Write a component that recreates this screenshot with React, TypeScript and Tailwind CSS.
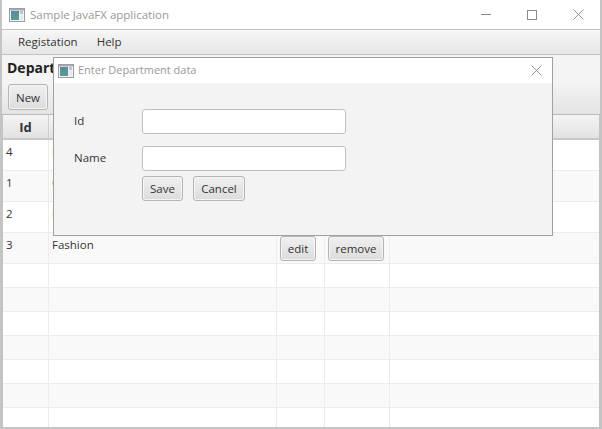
const font = { fontFamily: '"Open Sans", "Liberation Sans", sans-serif' };

function AppIcon() {
  return (
    <svg width="16" height="14" viewBox="0 0 16 14" className="shrink-0">
      <defs>
        <linearGradient id="iconFill" x1="0" y1="0" x2="0" y2="1">
          <stop offset="0" stopColor="#5d86a0" />
          <stop offset="1" stopColor="#58a08c" />
        </linearGradient>
      </defs>
      <rect x="0.5" y="0.5" width="15" height="13" fill="#f2f3f4" stroke="#9a9da1" />
      <rect x="1" y="1" width="14" height="1.5" fill="#a8abae" />
      <rect x="2" y="3" width="8" height="9" fill="url(#iconFill)" />
      <rect x="11" y="3" width="3" height="3" fill="#b9c4cb" />
      <rect x="11" y="7" width="3" height="5" fill="#e6eaec" />
    </svg>
  );
}

function X({ size = 11 }: { size?: number }) {
  return (
    <svg width={size} height={size} viewBox="0 0 11 11">
      <path d="M0.5 0.5L10.5 10.5M10.5 0.5L0.5 10.5" stroke="#8a8a8a" strokeWidth="0.9" fill="none" />
    </svg>
  );
}

function Btn({ children, className = "" }: { children: string; className?: string }) {
  return (
    <div className={`flex items-center justify-center rounded-[3px] border border-[#b5b5b5] bg-gradient-to-b from-[#f0f0f0] to-[#dcdcdc] text-[11.5px] text-[#333] shadow-[inset_0_0_0_1px_#f4f4f4] ${className}`}>
      {children}
    </div>
  );
}

function Row({ id, name, tall, odd, buttons }: { id?: string; name?: string; tall?: boolean; odd?: boolean; buttons?: boolean }) {
  return (
    <div className={`flex shrink-0 border-b border-[#ececec] ${tall ? "h-[31px]" : "h-[24px]"} ${odd ? "bg-[#f9f9f9]" : "bg-white"}`}>
      <div className="w-[46px] border-r border-[#ececec] pl-[3px] text-[11.5px] leading-[23px] text-[#333]">{id}</div>
      <div className="w-[228px] border-r border-[#ececec] pl-[3px] text-[11.5px] leading-[23px] text-[#333]">{name}</div>
      <div className="flex w-[48px] border-r border-[#ececec] pl-[3px] pt-[3px]">
        {buttons && <Btn className="h-[25px] w-[36px]">edit</Btn>}
      </div>
      <div className="flex w-[65px] border-r border-[#ececec] pl-[3px] pt-[3px]">
        {buttons && <Btn className="h-[25px] w-[56px]">remove</Btn>}
      </div>
      <div className="flex-1" />
    </div>
  );
}

export default function App() {
  return (
    <div style={font} className="relative flex h-[429px] w-[602px] flex-col overflow-hidden border-x-2 border-b-2 border-[#c4c4c4] bg-white">
      <div className="flex h-[29px] shrink-0 items-center bg-white pl-[7px]">
        <AppIcon />
        <span className="ml-[5px] text-[11.5px] text-[#999]">Sample JavaFX application</span>
        <div className="ml-auto flex items-center pr-[16px]">
          <div className="h-px w-[10px] bg-[#8a8a8a]" />
          <div className="ml-[36px] h-[10px] w-[10px] border border-[#8a8a8a]" />
          <div className="ml-[36px] flex"><X /></div>
        </div>
      </div>
      <div className="flex h-[26px] shrink-0 items-center border-y border-[#c2c2c2] bg-gradient-to-b from-[#f6f6f6] to-[#e6e6e6] pl-[16px] text-[11.5px] text-[#333]">
        <span>Registation</span>
        <span className="ml-[19px]">Help</span>
      </div>
      <div className="flex h-[25px] shrink-0 items-center bg-[#f4f4f4] pl-[5px] text-[14px] font-bold text-[#222]">Department</div>
      <div className="flex h-[35px] shrink-0 items-center border-b border-[#b8b8b8] bg-gradient-to-b from-[#f5f5f5] to-[#e4e4e4] pl-[6px]">
        <Btn className="h-[26px] w-[40px] pt-px">New</Btn>
      </div>
      <div className="flex min-h-0 flex-1 flex-col border-x border-[#c4c4c4]">
        <div className="flex h-[25px] shrink-0 border-b-2 border-[#c8c8c8] bg-gradient-to-b from-[#f4f4f4] to-[#e2e2e2] text-[13px] font-bold text-[#333]">
          <div className="flex w-[46px] items-center justify-center border-r border-[#d0d0d0] pt-[2px]">Id</div>
          <div className="flex w-[228px] items-center justify-center border-r border-[#d0d0d0] pt-[2px]">Name</div>
          <div className="w-[48px] border-r border-[#d0d0d0]" />
          <div className="w-[65px] border-r border-[#d0d0d0]" />
          <div className="flex-1" />
        </div>
        <Row tall id="4" name="Home" />
        <Row tall odd id="1" name="Games" />
        <Row tall id="2" name="Electronics" />
        <Row tall odd id="3" name="Fashion" buttons />
        <Row />
        <Row odd />
        <Row />
        <Row odd />
        <Row />
        <Row odd />
        <Row />
      </div>

      <div className="absolute left-[51px] top-[57px] flex h-[179px] w-[500px] flex-col border border-[#a0a0a0] bg-[#f3f3f3]">
        <div className="flex h-[25px] shrink-0 items-center bg-white pl-[4px]">
          <AppIcon />
          <span className="ml-[4px] text-[11px] text-[#999]">Enter Department data</span>
          <div className="ml-auto flex pr-[10px]"><X /></div>
        </div>
        <div className="flex flex-col pl-[88px] pt-[26px]">
          <div className="flex h-[24px] items-center">
            <span className="-ml-[68px] w-[68px] text-[11.5px] text-[#333]">Id</span>
            <div className="h-[25px] w-[204px] rounded-[3px] border border-[#c0c0c0] bg-white" />
          </div>
          <div className="mt-[13px] flex h-[24px] items-center">
            <span className="-ml-[68px] w-[68px] text-[11.5px] text-[#333]">Name</span>
            <div className="h-[25px] w-[204px] rounded-[3px] border border-[#c0c0c0] bg-white" />
          </div>
          <div className="mt-[6px] flex gap-[10px]">
            <Btn className="h-[25px] w-[41px]">Save</Btn>
            <Btn className="h-[25px] w-[52px]">Cancel</Btn>
          </div>
        </div>
      </div>
    </div>
  );
}
